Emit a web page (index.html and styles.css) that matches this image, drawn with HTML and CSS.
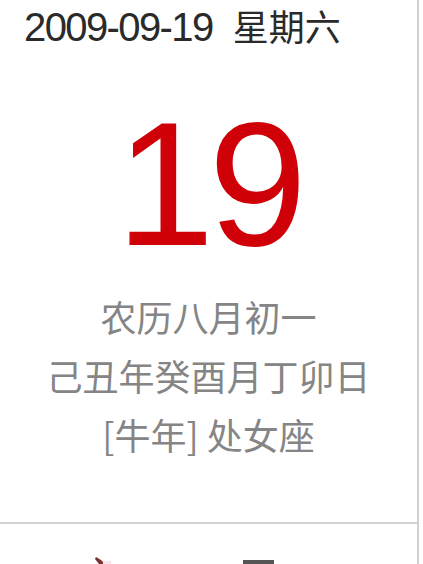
FILE: index.html
```html
<!DOCTYPE html>
<html>
	<head>
		<meta charset="UTF-8">
		<title>万年历</title>
		<link rel="stylesheet" href="styles.css">
	</head>
	<body>
		<div id="calendar">
			<div class="today">
				<span class="ymd">2009-09-19</span><span class="week">星期六</span>
			</div>
			<div class="day">19</div>
			<div class="lunar">
				<p>农历八月初一</p>
				<p>己丑年癸酉月丁卯日</p>
				<p>[牛年] 处女座</p>
			</div>
			<div class="more">
				<span class="icon">
					<svg width="100" height="32" viewBox="0 0 100 32">
						<rect x="0" y="0" width="100" height="32" fill="#fefefe"/>
						<path d="M51 25 L56 28 L60 32 L54 32 L50 27 Z" fill="#7a3030"/>
						<rect x="58" y="29" width="8" height="3" fill="#f8e4ea"/>
					</svg>
				</span>
				<span class="bar"></span>
			</div>
		</div>
	</body>
</html>
```

FILE: styles.css
```css
*{
	margin: 0;
	padding: 0;
}
body{
	background: #fff;
	overflow: hidden;
}
#calendar{
	width: 417px;
	height: 564px;
	border-right: 2px solid #d2d2d2;
	overflow: hidden;
	font-family: "Liberation Sans", "Noto Sans CJK SC", sans-serif;
}
.today{
	height: 50px;
	line-height: 50px;
	padding-left: 24px;
	color: #2a2a2a;
	white-space: nowrap;
}
.today .ymd{
	font-size: 40px;
	letter-spacing: -1.6px;
}
.today .week{
	font-family: "Noto Sans CJK SC", sans-serif;
	font-size: 36px;
	margin-left: 20px;
}
.day{
	margin-top: 46px;
	height: 177px;
	line-height: 177px;
	font-size: 177px;
	letter-spacing: -6px;
	text-align: center;
	color: #d00008;
}
.lunar{
	margin-top: 14px;
	text-align: center;
	font-family: "Noto Sans CJK SC", sans-serif;
	font-size: 36px;
	line-height: 59px;
	color: #858585;
}
.more{
	margin-top: 58px;
	border-top: 2px solid #d2d2d2;
	margin-right: -2px;
	display: flex;
	align-items: flex-start;
	height: 60px;
}
.more .icon{
	margin: 8px 0 0 45px;
	display: block;
	line-height: 0;
}
.more .bar{
	display: block;
	width: 31px;
	height: 4px;
	margin: 36px 0 0 98px;
	background: #555;
}
```
